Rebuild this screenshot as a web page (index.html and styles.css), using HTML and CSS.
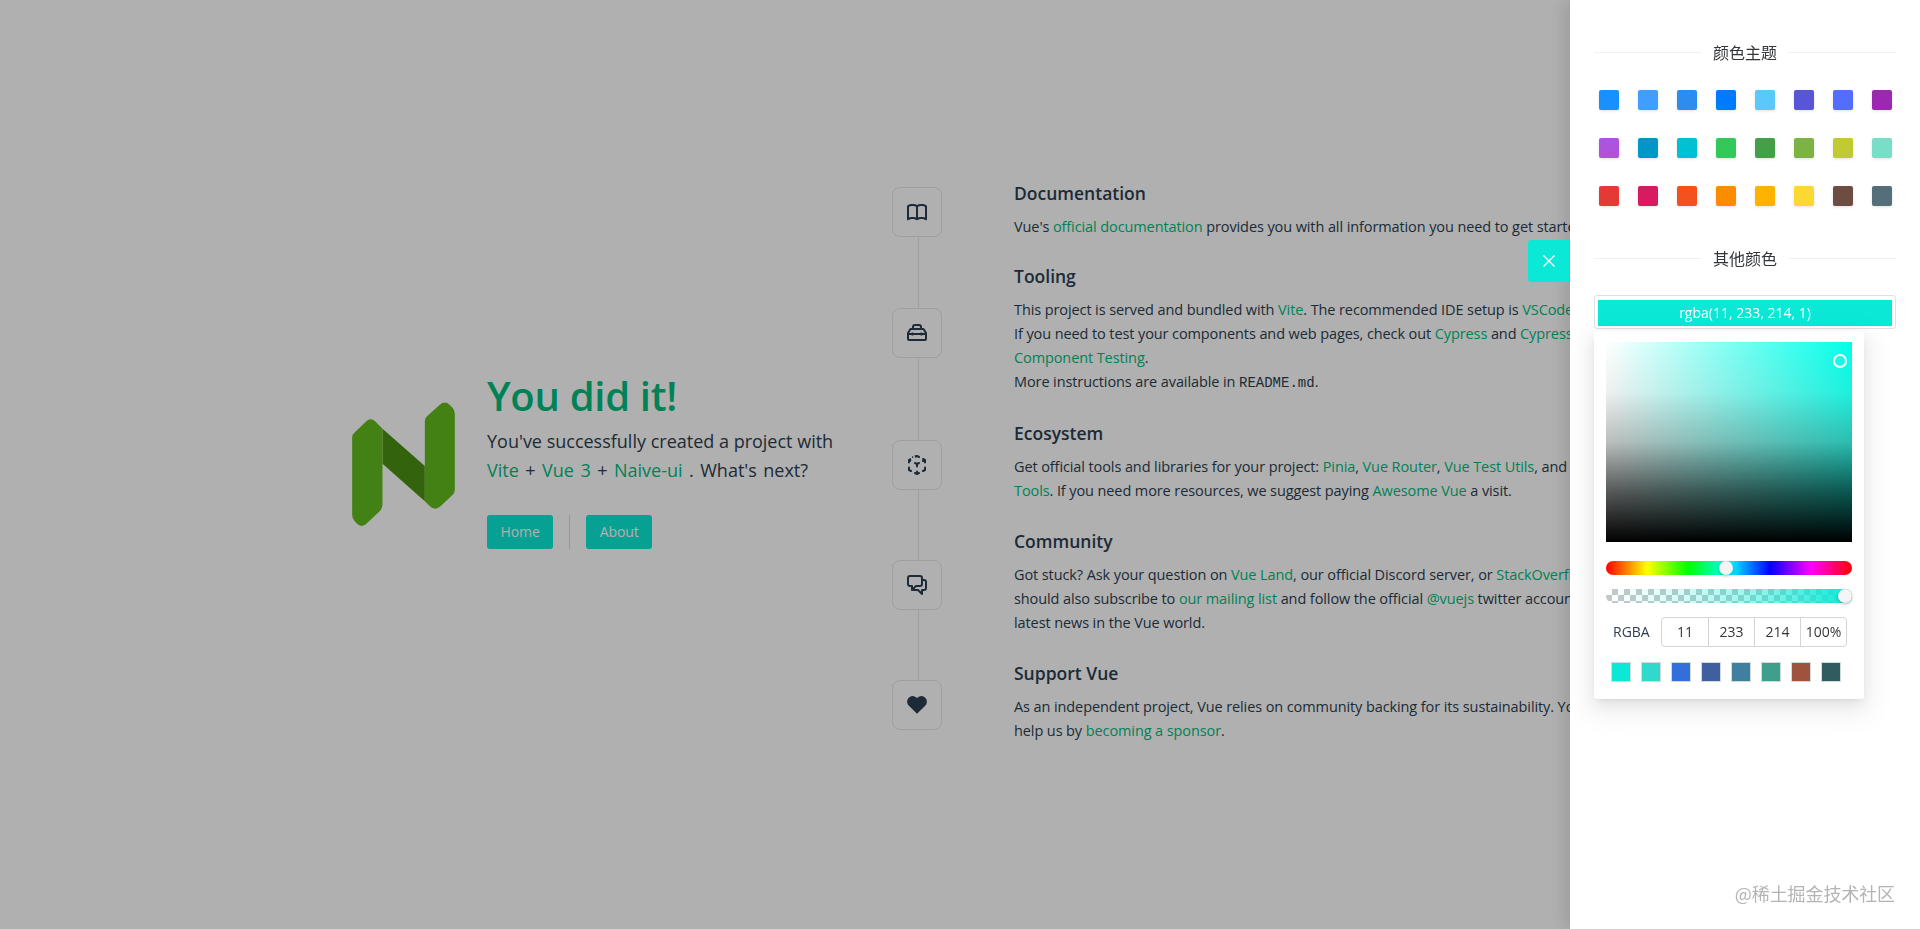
FILE: index.html
```html
<!DOCTYPE html>
<html lang="en">
<head>
    <meta charset="UTF-8">
    <title>You did it!</title>
    <link rel="stylesheet" href="styles.css">
</head>
<body>
    <main class="page">
        <header class="hero">
            <svg class="logo" viewBox="37 5 308 375">
                <path fill="#4b9114" d="M128 85L255 197V303L128 190Z"/>
                <path fill="#62bc1f" d="M37 112Q37 102 45 96L78 64Q92 50 106 63L128 85V312Q128 326 118 334L82 368Q66 386 50 369L44 362Q37 354 37 344Z"/>
                <path fill="#62bc1f" d="M255 62Q255 52 263 46L300 13Q315 0 330 14L338 22Q345 29 345 40V268Q345 278 337 285L302 318Q286 332 270 318L255 303Z"/>
            </svg>
            <div class="hero-text">
                <h1>You did it!</h1>
                <p class="hero-sub">You've successfully created a project with<br><span class="hero-links"><a href="#">Vite</a> + <a href="#">Vue 3</a> + <a href="#">Naive-ui</a> . What's next?</span></p>
                <nav class="hero-nav">
                    <a class="nav-button" href="#">Home</a>
                    <span class="nav-divider"></span>
                    <a class="nav-button" href="#">About</a>
                </nav>
            </div>
        </header>

        <section class="features">
            <div class="item">
                <div class="rail">
                    <span class="rail-line"></span>
                    <span class="rail-icon">
                        <svg width="20" height="17" viewBox="0 0 20 17" fill="currentColor"><path d="M11 2.253a1 1 0 1 0-2 0h2zm-2 13a1 1 0 1 0 2 0H9zm.447-12.167a1 1 0 1 0 1.107-1.666L9.447 3.086zM1 2.253L.447 1.42A1 1 0 0 0 0 2.253h1zm0 13H0a1 1 0 0 0 1.553.833L1 15.253zm8.447.833a1 1 0 1 0 1.107-1.666l-1.107 1.666zm0-14.666a1 1 0 1 0 1.107 1.666L9.447 1.42zM19 2.253h1a1 1 0 0 0-.447-.833L19 2.253zm0 13l-.553.833A1 1 0 0 0 20 15.253h-1zm-9.553-.833a1 1 0 1 0 1.107 1.666L9.447 14.42zM9 2.253v13h2v-13H9zm1.553-.833C9.203.523 7.42 0 5.5 0v2c1.572 0 2.961.431 3.947 1.086l1.107-1.666zM5.5 0C3.58 0 1.797.523.447 1.42l1.107 1.666C2.539 2.431 3.928 2 5.5 2V0zM0 2.253v13h2v-13H0zm1.553 13.833C2.539 15.431 3.928 15 5.5 15v-2c-1.92 0-3.703.523-5.053 1.42l1.107 1.666zM5.5 15c1.572 0 2.961.431 3.947 1.086l1.107-1.666C9.203 13.523 7.42 13 5.5 13v2zm5.053-11.914C11.539 2.431 12.928 2 14.5 2V0c-1.92 0-3.703.523-5.053 1.42l1.107 1.666zM14.5 2c1.573 0 2.961.431 3.947 1.086l1.107-1.666C18.203.523 16.421 0 14.5 0v2zm3.5.253v13h2v-13h-2zm1.553 12.167C18.203 13.523 16.421 13 14.5 13v2c1.573 0 2.961.431 3.947 1.086l1.107-1.666zM14.5 13c-1.92 0-3.703.523-5.053 1.42l1.107 1.666C11.539 15.431 12.928 15 14.5 15v-2z"/></svg>
                    </span>
                    <span class="rail-line"></span>
                </div>
                <div class="details">
                    <h3>Documentation</h3>
                    Vue's <a href="#">official documentation</a> provides you with all information you need to get started.
                </div>
            </div>

            <div class="item">
                <div class="rail">
                    <span class="rail-line"></span>
                    <span class="rail-icon">
                        <svg width="20" height="17" viewBox="0 0 20 17" fill="none" stroke="currentColor" stroke-width="2"><path d="M6 5V3.200Q6 1 8 1h4q2 0 2 2.200V5"/><path d="M3.500 5h13L19 9v6a1 1 0 0 1-1 1H2a1 1 0 0 1-1-1V9z" stroke-linejoin="round"/><path d="M1 10h18"/><path d="M5.500 8.500v3M14.500 8.500v3" stroke-width="1.800"/></svg>
                    </span>
                    <span class="rail-line"></span>
                </div>
                <div class="details">
                    <h3>Tooling</h3>
                    This project is served and bundled with <a href="#">Vite</a>. The recommended IDE setup is <a href="#">VSCode</a> + <a href="#">Volar</a>.<br>
                    If you need to test your components and web pages, check out <a href="#">Cypress</a> and <a href="#">Cypress</a><br>
                    <a href="#">Component Testing</a>.<br>
                    More instructions are available in <code>README.md</code>.
                </div>
            </div>

            <div class="item">
                <div class="rail">
                    <span class="rail-line"></span>
                    <span class="rail-icon">
                        <svg width="18" height="20" viewBox="0 0 18 20" fill="currentColor"><path d="M11.447 8.894a1 1 0 1 0-.894-1.789l.894 1.789zm-2.894-.789a1 1 0 1 0 .894 1.789l-.894-1.789zm0 1.789a1 1 0 1 0 .894-1.789l-.894 1.789zM7.447 7.106a1 1 0 1 0-.894 1.789l.894-1.789zM10 9a1 1 0 1 0-2 0h2zm-2 2.5a1 1 0 1 0 2 0H8zm9.447-5.606a1 1 0 1 0-.894-1.789l.894 1.789zm-2.894-.789a1 1 0 1 0 .894 1.789l-.894-1.789zm2 .789a1 1 0 1 0 .894-1.789l-.894 1.789zm-1.106-2.789a1 1 0 1 0-.894 1.789l.894-1.789zM18 5a1 1 0 1 0-2 0h2zm-2 2.5a1 1 0 1 0 2 0h-2zm-5.447-4.606a1 1 0 1 0 .894-1.789l-.894 1.789zM9.447.106a1 1 0 1 0-.894 1.789l.894-1.789zm-2 1.789a1 1 0 1 0-.894-1.789l.894 1.789zm-2.894-.789a1 1 0 1 0 .894 1.789l-.894-1.789zM2 5a1 1 0 1 0-2 0h2zM0 7.500a1 1 0 1 0 2 0H0zm8.553 12.394a1 1 0 1 0 .894-1.789l-.894 1.789zm-1.106-2.789a1 1 0 1 0-.894 1.789l.894-1.789zm1.106 1a1 1 0 1 0 .894 1.789l-.894-1.789zm2.894.789a1 1 0 1 0-.894-1.789l.894 1.789zM8 19a1 1 0 1 0 2 0H8zm2-2.500a1 1 0 1 0-2 0h2zm-7.447.394a1 1 0 1 0 .894-1.789l-.894 1.789zM1 15H0a1 1 0 0 0 .553.894L1 15zm1-2.500a1 1 0 1 0-2 0h2zm12.553 2.606a1 1 0 1 0 .894 1.789l-.894-1.789zM17 15l.447.894A1 1 0 0 0 18 15h-1zm1-2.500a1 1 0 1 0-2 0h2zm-7.447-5.394l-2 1 .894 1.789 2-1-.894-1.789zm-1.106 1l-2-1-.894 1.789 2 1 .894-1.789zM8 9v2.500h2V9H8zm8.553-4.894l-2 1 .894 1.789 2-1-.894-1.789zm.894 0l-2-1-.894 1.789 2 1 .894-1.789zM16 5v2.500h2V5h-2zm-4.553-3.894l-2-1-.894 1.789 2 1 .894-1.789zm-2.894-1l-2 1 .894 1.789 2-1L8.553.106zM1.447 5.894l2-1-.894-1.789-2 1 .894 1.789zm-.894 0l2 1 .894-1.789-2-1-.894 1.789zM0 5v2.500h2V5H0zm9.447 13.106l-2-1-.894 1.789 2 1 .894-1.789zm0 1.789l2-1-.894-1.789-2 1 .894 1.789zM10 19v-2.500H8V19h2zm-6.553-3.894l-2-1-.894 1.789 2 1 .894-1.789zM2 15v-2.500H0V15h2zm13.447 1.894l2-1-.894-1.789-2 1 .894 1.789zM18 15v-2.500h-2V15h2z"/></svg>
                    </span>
                    <span class="rail-line"></span>
                </div>
                <div class="details">
                    <h3>Ecosystem</h3>
                    Get official tools and libraries for your project: <a href="#">Pinia</a>, <a href="#">Vue Router</a>, <a href="#">Vue Test Utils</a>, and <a href="#">Vue Dev</a><br>
                    <a href="#">Tools</a>. If you need more resources, we suggest paying <a href="#">Awesome Vue</a> a visit.
                </div>
            </div>

            <div class="item">
                <div class="rail">
                    <span class="rail-line"></span>
                    <span class="rail-icon">
                        <svg width="20" height="20" viewBox="0 0 20 20" fill="currentColor"><path d="M15 4a1 1 0 1 0 0 2V4zm0 11v-1a1 1 0 0 0-1 1h1zm0 4l-.707.707A1 1 0 0 0 16 19h-1zm-4-4l.707-.707A1 1 0 0 0 11 14v1zm-4.707-1.293a1 1 0 0 0-1.414 1.414l1.414-1.414zm-.707.707l-.707-.707.707.707zM9 11v-1a1 1 0 0 0-.707.293L9 11zm-4 0h1a1 1 0 0 0-1-1v1zm0 4H4a1 1 0 0 0 1.707.707L5 15zm10-9h2V4h-2v2zm2 0a1 1 0 0 1 1 1h2a3 3 0 0 0-3-3v2zm1 1v6h2V7h-2zm0 6a1 1 0 0 1-1 1v2a3 3 0 0 0 3-3h-2zm-1 1h-2v2h2v-2zm-3 1v4h2v-4h-2zm1.707 3.293l-4-4-1.414 1.414 4 4 1.414-1.414zM11 14H7v2h4v-2zm-4 0c-.276 0-.525-.111-.707-.293l-1.414 1.414C5.420 15.663 6.172 16 7 16v-2zm-.707 1.121l3.414-3.414-1.414-1.414-3.414 3.414 1.414 1.414zM9 12h4v-2H9v2zm4 0a3 3 0 0 0 3-3h-2a1 1 0 0 1-1 1v2zm3-3V3h-2v6h2zm0-6a3 3 0 0 0-3-3v2a1 1 0 0 1 1 1h2zm-3-3H3v2h10V0zM3 0a3 3 0 0 0-3 3h2a1 1 0 0 1 1-1V0zM0 3v6h2V3H0zm0 6a3 3 0 0 0 3 3v-2a1 1 0 0 1-1-1H0zm3 3h2v-2H3v2zm1-1v4h2v-4H4zm1.707 4.707l.586-.586-1.414-1.414-.586.586 1.414 1.414z"/></svg>
                    </span>
                    <span class="rail-line"></span>
                </div>
                <div class="details">
                    <h3>Community</h3>
                    Got stuck? Ask your question on <a href="#">Vue Land</a>, our official Discord server, or <a href="#">StackOverflow</a>. You<br>
                    should also subscribe to <a href="#">our mailing list</a> and follow the official <a href="#">@vuejs</a> twitter account for<br>
                    latest news in the Vue world.
                </div>
            </div>

            <div class="item">
                <div class="rail">
                    <span class="rail-line"></span>
                    <span class="rail-icon">
                        <svg width="20" height="20" viewBox="0 0 20 20" fill="currentColor"><path d="M10 3.220l-.61-.6a5.500 5.500 0 0 0-7.666.105 5.500 5.500 0 0 0-.114 7.665L10 18.780l8.390-8.400a5.500 5.500 0 0 0-.114-7.665 5.500 5.500 0 0 0-7.666-.105l-.61.610z"/></svg>
                    </span>
                    <span class="rail-line"></span>
                </div>
                <div class="details">
                    <h3>Support Vue</h3>
                    As an independent project, Vue relies on community backing for its sustainability. You can<br>
                    help us by <a href="#">becoming a sponsor</a>.
                </div>
            </div>
        </section>
    </main>

    <div class="mask"></div>

    <aside class="drawer">
        <button class="drawer-toggle">
            <svg width="12" height="12" viewBox="0 0 12 12" fill="none" stroke="#fff" stroke-width="1.300"><path d="M.5.500l11 11M11.500.500l-11 11"/></svg>
        </button>

        <div class="divider"><span>颜色主题</span></div>
        <div class="theme-grid">
            <span class="theme-swatch c1"></span>
            <span class="theme-swatch c2"></span>
            <span class="theme-swatch c3"></span>
            <span class="theme-swatch c4"></span>
            <span class="theme-swatch c5"></span>
            <span class="theme-swatch c6"></span>
            <span class="theme-swatch c7"></span>
            <span class="theme-swatch c8"></span>
            <span class="theme-swatch c9"></span>
            <span class="theme-swatch c10"></span>
            <span class="theme-swatch c11"></span>
            <span class="theme-swatch c12"></span>
            <span class="theme-swatch c13"></span>
            <span class="theme-swatch c14"></span>
            <span class="theme-swatch c15"></span>
            <span class="theme-swatch c16"></span>
            <span class="theme-swatch c17"></span>
            <span class="theme-swatch c18"></span>
            <span class="theme-swatch c19"></span>
            <span class="theme-swatch c20"></span>
            <span class="theme-swatch c21"></span>
            <span class="theme-swatch c22"></span>
            <span class="theme-swatch c23"></span>
            <span class="theme-swatch c24"></span>
        </div>

        <div class="divider divider-other"><span>其他颜色</span></div>
        <div class="color-trigger">
            <div class="color-value">rgba(11, 233, 214, 1)</div>
        </div>

        <div class="picker">
            <div class="picker-sat"><span class="sat-pointer"></span></div>
            <div class="picker-slider picker-hue"><span class="slider-thumb hue-thumb"></span></div>
            <div class="picker-slider picker-alpha">
                <div class="alpha-fill"></div>
                <span class="slider-thumb alpha-thumb"></span>
            </div>
            <div class="picker-inputs">
                <span class="picker-label">RGBA</span>
                <div class="input-group">
                    <span>11</span>
                    <span>233</span>
                    <span>214</span>
                    <span>100%</span>
                </div>
            </div>
            <div class="picker-presets">
                <span class="preset p1"></span>
                <span class="preset p2"></span>
                <span class="preset p3"></span>
                <span class="preset p4"></span>
                <span class="preset p5"></span>
                <span class="preset p6"></span>
                <span class="preset p7"></span>
                <span class="preset p8"></span>
            </div>
        </div>
    </aside>

    <div class="watermark">@稀土掘金技术社区</div>
</body>
</html>
```

FILE: styles.css
```css
* {
    box-sizing: border-box;
}

body {
    margin: 0;
    height: 100vh;
    overflow: hidden;
    background: #fff;
    color: #2c3e50;
    font-family: "Open Sans", "Noto Sans CJK SC", sans-serif;
    font-size: 14.5px;
    letter-spacing: -0.1px;
    line-height: 24px;
}

a {
    color: #00bd7e;
    text-decoration: none;
}

.page {
    display: flex;
    align-items: center;
    height: 100vh;
}

/* left side */
.hero {
    display: flex;
    align-items: center;
    gap: 32px;
    flex: none;
    width: 892px;
    padding-left: 352px;
}

.logo {
    width: 103px;
    height: 125px;
    flex: none;
}

.hero-text {
    padding-bottom: 4.5px;
}

.hero-text h1 {
    margin: 0 0 11px;
    color: #00bd7e;
    font-size: 40px;
    font-weight: 600;
    letter-spacing: -0.3px;
    line-height: 40px;
}

.hero-sub {
    margin: 0;
    font-size: 18px;
    letter-spacing: 0;
    line-height: 29px;
}

.hero-links {
    word-spacing: 1.8px;
}

.hero-nav {
    display: flex;
    gap: 16px;
    margin-top: 30.500px;
}

.nav-button {
    display: flex;
    align-items: center;
    height: 34px;
    padding: 0 13.500px;
    border-radius: 3px;
    background: #0be9d6;
    color: #fff;
    font-size: 14px;
}

.nav-divider {
    width: 1px;
    background: #dcdcdc;
}

/* right side */
.features {
    flex: none;
    white-space: nowrap;
}

.item {
    display: flex;
    gap: 72px;
}

.rail {
    display: flex;
    flex-direction: column;
    width: 50px;
    flex: none;
}

.rail-line {
    flex: 1;
    width: 1px;
    margin-left: 26px;
    background: #e6e6e6;
}

.item:first-child .rail-line:first-child,
.item:last-child .rail-line:last-child {
    visibility: hidden;
}

.rail-icon {
    display: flex;
    align-items: center;
    justify-content: center;
    width: 50px;
    height: 50px;
    border: 1px solid #e6e6e6;
    border-radius: 8px;
}

.details {
    padding: 6px 0 16px;
}

.item:first-child .details {
    padding: 7px 0 15px;
}

.details h3 {
    margin: 0 0 6px;
    font-size: 17.5px;
    font-weight: 600;
    letter-spacing: 0;
    line-height: 32px;
}

code {
    font-family: "Liberation Mono", monospace;
    font-size: 14px;
    letter-spacing: 0;
}

.mask {
    position: fixed;
    inset: 0;
    background: rgba(0, 0, 0, 0.31);
}

/* settings drawer */
.drawer {
    position: fixed;
    top: 0;
    right: 0;
    bottom: 0;
    width: 350px;
    padding: 41px 24px 0;
    background: #fff;
    box-shadow: -6px 0 16px rgba(0, 0, 0, 0.12);
    font-size: 14px;
    letter-spacing: 0;
}

.drawer-toggle {
    position: absolute;
    top: 240px;
    left: -42px;
    display: flex;
    align-items: center;
    justify-content: center;
    width: 42px;
    height: 42px;
    padding: 0;
    border: none;
    border-radius: 3px 0 0 3px;
    background: #0be9d6;
}

.divider {
    display: flex;
    align-items: center;
    gap: 12px;
    height: 24px;
    color: #333639;
    font-size: 16px;
}

.divider::before,
.divider::after {
    content: "";
    flex: 1;
    height: 1px;
    margin-top: -2px;
    background: #efeff5;
}

.divider-other {
    margin-top: 41px;
}

.theme-grid {
    display: grid;
    grid-template-columns: repeat(8, 20px);
    gap: 28px 19px;
    margin: 25px 0 0 5px;
}

.theme-swatch {
    height: 20px;
    border-radius: 2px;
    box-shadow: 0 1px 3px rgba(0, 0, 0, 0.12);
}

.c1 { background: #1890ff; }
.c2 { background: #409eff; }
.c3 { background: #2d8cf0; }
.c4 { background: #007aff; }
.c5 { background: #5ac8fa; }
.c6 { background: #5856d6; }
.c7 { background: #536dfe; }
.c8 { background: #9c27b0; }
.c9 { background: #af52de; }
.c10 { background: #0096c7; }
.c11 { background: #00c1d4; }
.c12 { background: #34c759; }
.c13 { background: #43a047; }
.c14 { background: #7cb342; }
.c15 { background: #c0ca33; }
.c16 { background: #78dec7; }
.c17 { background: #e53935; }
.c18 { background: #d81b60; }
.c19 { background: #f4511e; }
.c20 { background: #fb8c00; }
.c21 { background: #ffb300; }
.c22 { background: #fdd835; }
.c23 { background: #6d4c41; }
.c24 { background: #546e7a; }

.color-trigger {
    height: 34px;
    margin-top: 24px;
    padding: 4px 3px 2px;
    border: 1px solid #e0e0e6;
    border-radius: 3px;
}

.color-value {
    height: 26px;
    background: #0be9d6;
    color: #fff;
    line-height: 26px;
    text-align: center;
}

.picker {
    width: 270px;
    height: 368px;
    margin-top: 2px;
    padding: 11px 12px 0;
    border-radius: 3px;
    background: #fff;
    box-shadow: 0 3px 6px -4px rgba(0, 0, 0, 0.12), 0 6px 16px 0 rgba(0, 0, 0, 0.08), 0 9px 28px 8px rgba(0, 0, 0, 0.05);
}

.picker-sat {
    position: relative;
    height: 200px;
    background:
        linear-gradient(to bottom, rgba(0, 0, 0, 0), rgba(0, 0, 0, 0.06) 25%, rgba(0, 0, 0, 0.26) 50%, rgba(0, 0, 0, 0.66) 75%, #000),
        linear-gradient(to bottom, rgba(255, 255, 255, 0), rgba(255, 255, 255, 0.22) 50%, rgba(255, 255, 255, 0)),
        linear-gradient(to right, #fff, rgba(255, 255, 255, 0)),
        #00ffe9;
}

.sat-pointer {
    position: absolute;
    top: 12px;
    left: 227px;
    width: 14px;
    height: 14px;
    border: 2px solid #fff;
    border-radius: 50%;
}

.picker-slider {
    position: relative;
    height: 14px;
    border-radius: 7px;
}

.picker-hue {
    margin-top: 19px;
    background: linear-gradient(to right, #f00, #ff0, #0f0, #0ff, #00f, #f0f, #f00);
}

.picker-alpha {
    margin-top: 14px;
    background: repeating-conic-gradient(#c4c8c8 0 25%, #fff 0 50%) 0 0 / 12px 12px;
}

.alpha-fill {
    height: 14px;
    border-radius: 7px;
    background: linear-gradient(to right, rgba(11, 233, 214, 0), rgba(11, 233, 214, 0.16) 30%, rgba(11, 233, 214, 0.43) 60%, #0be9d6);
}

.slider-thumb {
    position: absolute;
    top: 0;
    width: 14px;
    height: 14px;
    border-radius: 50%;
    background: #f5f5f5;
    box-shadow: 0 1px 3px rgba(0, 0, 0, 0.3);
}

.hue-thumb {
    left: 113px;
}

.alpha-thumb {
    left: 232px;
}

.picker-inputs {
    display: flex;
    align-items: center;
    margin-top: 14px;
}

.picker-label {
    width: 55px;
    padding-left: 7px;
    flex: none;
    color: #2c3e50;
    font-size: 14px;
}

.input-group {
    display: grid;
    grid-template-columns: repeat(4, 1fr);
    width: 186px;
    height: 30px;
    border: 1px solid #d4d4d4;
    border-radius: 4px;
}

.input-group span {
    border-left: 1px solid #d4d4d4;
    color: #333639;
    font-size: 14px;
    line-height: 28px;
    text-align: center;
}

.input-group span:first-child {
    border-left: none;
}

.picker-presets {
    display: flex;
    gap: 10px;
    margin-top: 15px;
    padding-left: 5px;
}

.preset {
    width: 20px;
    height: 20px;
    border: 1px solid #d0dcdc;
}

.p1 { background: #0be9d6; }
.p2 { background: #30d9cb; }
.p3 { background: #336fdb; }
.p4 { background: #3f5f9e; }
.p5 { background: #407fa0; }
.p6 { background: #3e9f8d; }
.p7 { background: #9f533e; }
.p8 { background: #305b5f; }

.watermark {
    position: fixed;
    top: 880px;
    right: 25px;
    color: #b4b4b4;
    font-family: "Noto Sans CJK SC", sans-serif;
    font-size: 18px;
    line-height: 26px;
}
```
